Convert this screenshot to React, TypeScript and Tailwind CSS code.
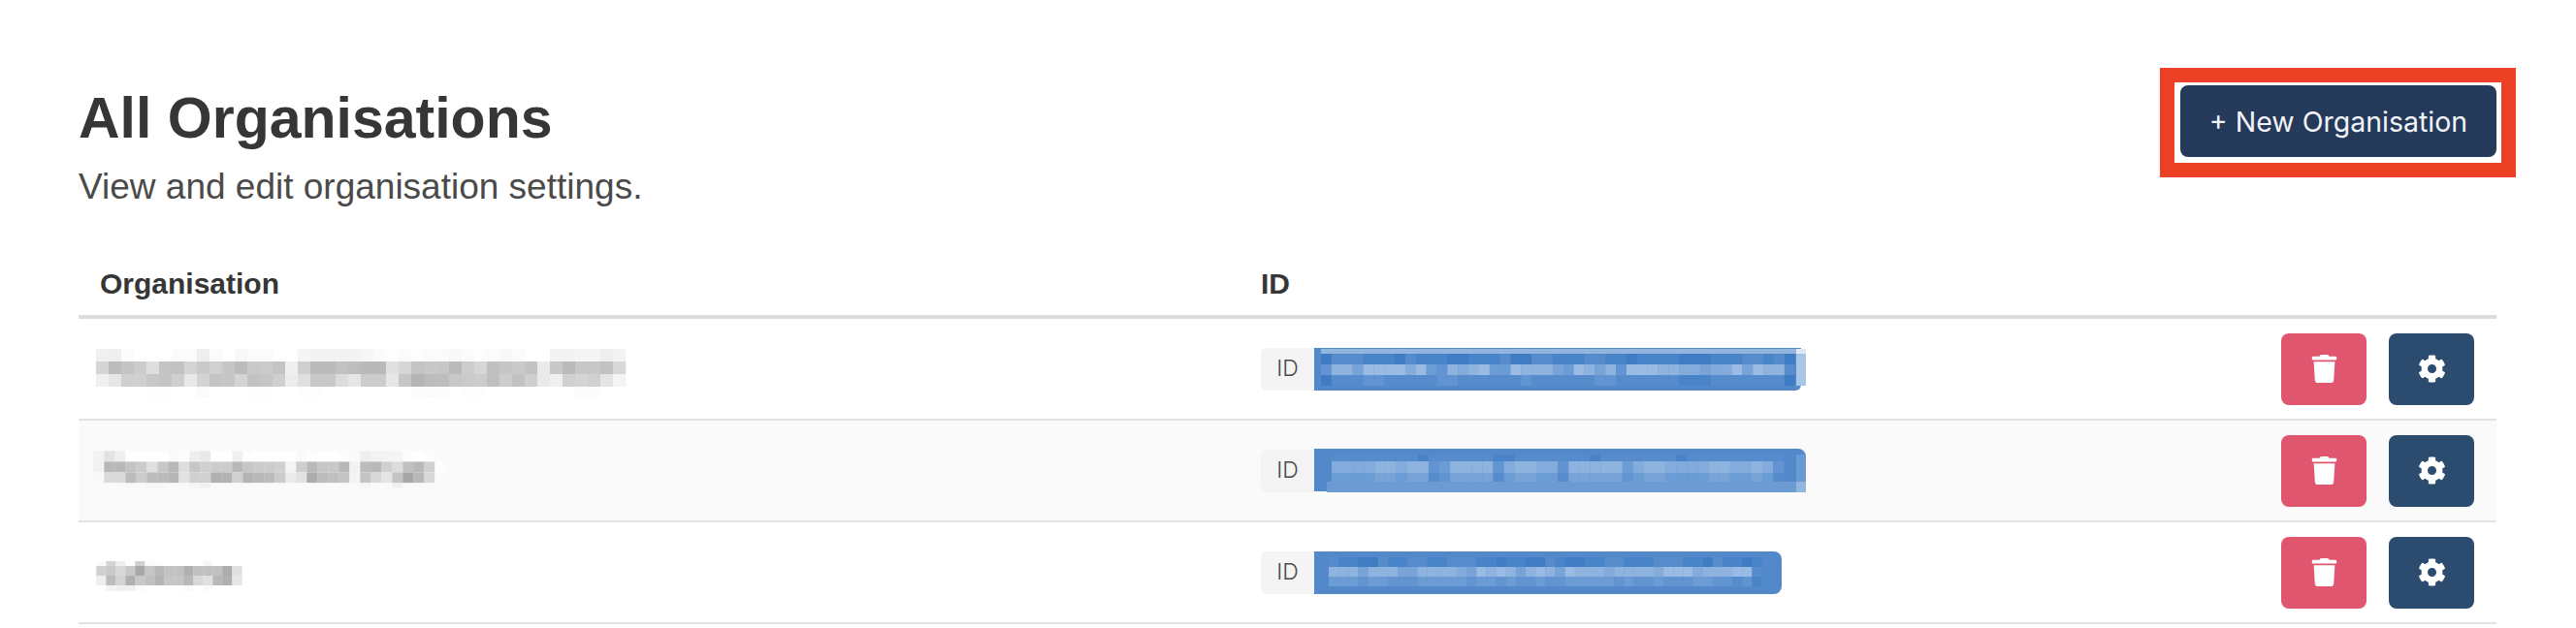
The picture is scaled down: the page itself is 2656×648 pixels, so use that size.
import React from "react";
import { FaTrash, FaCog } from "react-icons/fa";

type GreyRow = { y: number; h: number; v: string };

function GreyMosaic({ x0, cell, rows, width }: { x0: number; cell: number; rows: GreyRow[]; width: number }) {
  return (
    <svg width={width} height={70} viewBox={`0 0 ${width} 70`} className="blur-[0.6px]">
      {rows.map((r, i) =>
        r.v.split(" ").map((c, j) => (
          <rect key={`${i}-${j}`} x={x0 + j * cell} y={r.y} width={cell + 0.3} height={r.h} fill={`#${c}${c}${c}`} />
        ))
      )}
    </svg>
  );
}

const lvl = (d: number) => {
  const t = d / 9;
  const mix = (a: number, b: number) => Math.round(a + (b - a) * t);
  return `rgb(${mix(63, 165)},${mix(124, 195)},${mix(196, 231)})`;
};

function BlueCells({ x0, cell, rows }: { x0: number; cell: number; rows: { y: number; h: number; v: string }[] }) {
  return (
    <g className="blur-[0.6px]">
      {rows.map((r, i) =>
        r.v.split("").map((c, j) => (
          <rect key={`${i}-${j}`} x={x0 + j * cell} y={r.y} width={cell + 0.2} height={r.h} fill={lvl(Number(c))} />
        ))
      )}
    </g>
  );
}

const BASE = "#5389ca";

function Bar1() {
  return (
    <svg width={508} height={44} viewBox="0 0 508 44" className="block">
      <path d="M0 0H502V38A6 6 0 0 1 496 44H0Z" fill={BASE} />
      <rect x={7} y={1} width={490} height={5} fill="#92b5e0" />
      <BlueCells
        x0={7}
        cell={10.86}
        rows={[
          { y: 6, h: 11, v: "022211102111001112002211122110111100011122120" },
          { y: 17, h: 11, v: "377588886843767844877754875738887766566858772" },
          { y: 28, h: 11, v: "022233222223322222232222223322222211122222220" },
        ]}
      />
      <rect x={497} y={6} width={10} height={33} fill="#a9c5e8" />
      <rect x={497} y={1} width={10} height={5} fill="#dfe9f6" />
    </svg>
  );
}

function Bar2() {
  return (
    <svg width={508} height={45} viewBox="0 0 508 45" className="block">
      <path d="M0 0H499A8 8 0 0 1 507 8V45H13V44H0Z" fill={BASE} />
      <BlueCells
        x0={18}
        cell={11.1}
        rows={[
          { y: 6, h: 7, v: "222222221222222112222222122222221222222222" },
          { y: 13, h: 12, v: "666677677347777367766377777467766667766763" },
          { y: 25, h: 9, v: "444455455235555245544255555345544445544542" },
        ]}
      />
      <rect x={13} y={34} width={494} height={11} fill="#6c9bd3" />
      <rect x={497} y={6} width={10} height={28} fill="#6a9ad4" />
      <rect x={497} y={34} width={10} height={11} fill="#94b7e0" />
    </svg>
  );
}

function Bar3() {
  return (
    <svg width={482} height={44} viewBox="0 0 482 44" className="block">
      <path d="M0 0H474A8 8 0 0 1 482 8V36A8 8 0 0 1 474 44H0Z" fill={BASE} />
      <BlueCells
        x0={15}
        cell={10.15}
        rows={[
          { y: 6, h: 10, v: "21100211221122211011002100112211122211021101" },
          { y: 16, h: 10, v: "77757775577776587875787587776777768886777882" },
          { y: 26, h: 10, v: "44434433344444344343343344444343343334433231" },
        ]}
      />
    </svg>
  );
}

function Row({ striped, name, bar }: { striped?: boolean; name: React.ReactNode; bar: React.ReactNode }) {
  return (
    <div className={`flex h-[105px] items-center border-b-2 border-[#e2e2e2] ${striped ? "bg-[#fafafa]" : "bg-white"}`}>
      <div className="w-[1219px]">{name}</div>
      <div className="flex flex-1 items-center">
        <div className="flex h-[44px] w-[55px] items-center justify-center rounded-l-md bg-[#f4f4f4] font-['Inter',sans-serif] text-[23px] font-light text-[#4a4a4a]">
          ID
        </div>
        {bar}
      </div>
      <div className="flex gap-[23px] pr-[23px]">
        <button className="flex h-[74px] w-[88px] items-center justify-center rounded-lg bg-[#e0566e] text-white">
          <FaTrash size={29} />
        </button>
        <button className="flex h-[74px] w-[88px] items-center justify-center rounded-lg bg-[#2b4c6f] text-white">
          <FaCog size={29} />
        </button>
      </div>
    </div>
  );
}

export default function App() {
  return (
    <div className="h-[648px] overflow-hidden bg-white pl-[81px] pr-[82px] pt-[86px] font-['Liberation_Sans',sans-serif] text-[#363636]">
      <div className="flex items-start justify-between">
        <div>
          <h1 className="text-[59px] font-bold leading-[72px]">All Organisations</h1>
          <p className="mt-[14px] text-[37px] leading-[42px] text-[#4a4a4a]">View and edit organisation settings.</p>
        </div>
        <button className="relative mt-[2px] flex h-[74px] w-[326px] items-center justify-center rounded-lg bg-[#25395a] pt-[3px] font-['Inter',sans-serif] text-[28.5px] font-normal text-[#f1f4f8]">
          + New Organisation
          <span className="absolute -bottom-[21px] -left-[21px] -right-[20px] -top-[18px] border-[15px] border-[#ec4125]" />
        </button>
      </div>
      <div className="mt-[62px] flex h-[53px] items-start border-b-[4px] border-[#dcdcdc] text-[30px] font-bold leading-[34px]">
        <div className="w-[1219px] pl-[22px]">Organisation</div>
        <div>ID</div>
      </div>
      <Row
        name={
          <GreyMosaic
            x0={18}
            cell={13}
            width={600}
            rows={[
              { y: 14, h: 13, v: "f0 ef fb ff ff ff fb fb ee fb ff f8 fb fb ff ff f5 f3 f3 f3 f3 f6 fb fd fb fd fb fb f8 fb fd fb f8 fb ff ff f3 f3 f5 f5 ee f3" },
              { y: 27, h: 13, v: "d5 bc c4 cc de c4 c2 d4 ca d0 c6 bc c9 cb c4 ef cf bb bb c2 bd b9 b9 e0 d6 c4 c8 c6 ba cc d6 c0 c6 c9 c2 ea c8 ba c8 c8 c2 d8" },
              { y: 40, h: 13, v: "f0 e6 cf d0 c8 c4 cf e8 d4 c4 c6 d4 c2 c6 cf ec e0 c8 c8 dc e6 cc cc e6 c6 b4 bc bd c8 ca cc c0 cc c2 cf ea f0 d0 d4 d0 e4 f4" },
              { y: 53, h: 11, v: "ff ff ff ff fd fd ff ff fb ff ff ff fd fd ff ff fd fd ff ff ff ff ff ff ff fc fb fc ff fd fd ff ff ff ff ff ff ff fc fc ff ff" },
            ]}
          />
        }
        bar={<Bar1 />}
      />
      <Row
        striped
        name={
          <GreyMosaic
            x0={15.3}
            cell={11}
            width={500}
            rows={[
              { y: 14.4, h: 11, v: "f2 e2 ee ff ff ff ff fa fd ee e8 ff ff f0 fd ff ff ff ff fa fd ff ff fd fa ee f2 f4 f4 fd ff fd fa" },
              { y: 25.4, h: 11, v: "f2 b8 b8 c4 ca e0 c8 b8 de c6 d0 cc cc b8 c6 cc cc d0 f4 ce b8 c6 c8 b8 f2 bc b8 d0 dc c0 b8 d0 fd" },
              { y: 36.4, h: 11, v: "f8 da da bc cc bc bc b6 e2 d0 d0 b0 b2 d0 b4 b8 bc cc ea e2 ac bc c0 c4 f4 c4 d8 e4 c4 a6 b8 d8 fa" },
              { y: 47.4, h: 5, v: "fa fa fa f8 fa f6 f8 fa fa f6 f0 fa fa fa fa fa fa fa fa fa fa fa fa fa fa f6 fa fa f0 fa fa fa fa" },
            ]}
          />
        }
        bar={<Bar2 />}
      />
      <Row
        name={
          <GreyMosaic
            x0={18.3}
            cell={10}
            width={300}
            rows={[
              { y: 23, h: 5, v: "fa d4 ee fd d0 fa fd ff ff ff ff f6 ff ff ff" },
              { y: 28, h: 10, v: "d0 c8 d8 c8 a8 c6 b8 c2 c2 b0 c0 c0 c0 ac e0" },
              { y: 38, h: 10, v: "ee bc d4 b0 c8 c0 b4 c6 c6 b8 d8 e0 b8 b0 e6" },
              { y: 48, h: 6, v: "ff f4 f0 f0 fb ff ff ff ff fa ff fb ff ff ff" },
            ]}
          />
        }
        bar={<Bar3 />}
      />
    </div>
  );
}
